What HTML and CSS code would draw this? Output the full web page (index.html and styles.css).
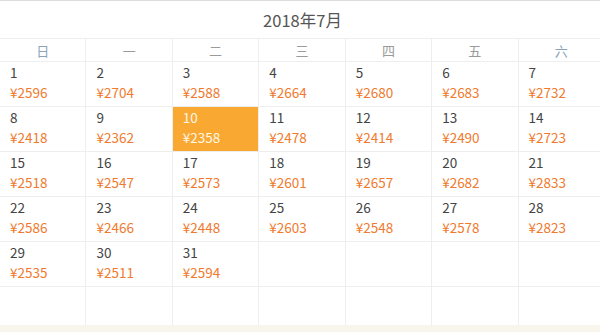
FILE: index.html
```html
<!DOCTYPE html>
<html lang="zh">
<head>
<meta charset="utf-8">
<link rel="stylesheet" href="styles.css">
</head>
<body>
<div class="page">
  <div class="calendar">
    <div class="title">2018年7月</div>
    <div class="weekdays">
      <div class="wd weekend">日</div>
      <div class="wd">一</div>
      <div class="wd">二</div>
      <div class="wd">三</div>
      <div class="wd">四</div>
      <div class="wd">五</div>
      <div class="wd weekend">六</div>
    </div>
    <div class="days">
      <div class="day"><span class="num">1</span><span class="price">¥2596</span></div>
      <div class="day"><span class="num">2</span><span class="price">¥2704</span></div>
      <div class="day"><span class="num">3</span><span class="price">¥2588</span></div>
      <div class="day"><span class="num">4</span><span class="price">¥2664</span></div>
      <div class="day"><span class="num">5</span><span class="price">¥2680</span></div>
      <div class="day"><span class="num">6</span><span class="price">¥2683</span></div>
      <div class="day"><span class="num">7</span><span class="price">¥2732</span></div>
      <div class="day"><span class="num">8</span><span class="price">¥2418</span></div>
      <div class="day"><span class="num">9</span><span class="price">¥2362</span></div>
      <div class="day selected"><span class="num">10</span><span class="price">¥2358</span></div>
      <div class="day"><span class="num">11</span><span class="price">¥2478</span></div>
      <div class="day"><span class="num">12</span><span class="price">¥2414</span></div>
      <div class="day"><span class="num">13</span><span class="price">¥2490</span></div>
      <div class="day"><span class="num">14</span><span class="price">¥2723</span></div>
      <div class="day"><span class="num">15</span><span class="price">¥2518</span></div>
      <div class="day"><span class="num">16</span><span class="price">¥2547</span></div>
      <div class="day"><span class="num">17</span><span class="price">¥2573</span></div>
      <div class="day"><span class="num">18</span><span class="price">¥2601</span></div>
      <div class="day"><span class="num">19</span><span class="price">¥2657</span></div>
      <div class="day"><span class="num">20</span><span class="price">¥2682</span></div>
      <div class="day"><span class="num">21</span><span class="price">¥2833</span></div>
      <div class="day"><span class="num">22</span><span class="price">¥2586</span></div>
      <div class="day"><span class="num">23</span><span class="price">¥2466</span></div>
      <div class="day"><span class="num">24</span><span class="price">¥2448</span></div>
      <div class="day"><span class="num">25</span><span class="price">¥2603</span></div>
      <div class="day"><span class="num">26</span><span class="price">¥2548</span></div>
      <div class="day"><span class="num">27</span><span class="price">¥2578</span></div>
      <div class="day"><span class="num">28</span><span class="price">¥2823</span></div>
      <div class="day"><span class="num">29</span><span class="price">¥2535</span></div>
      <div class="day"><span class="num">30</span><span class="price">¥2511</span></div>
      <div class="day"><span class="num">31</span><span class="price">¥2594</span></div>
      <div class="day empty"></div>
      <div class="day empty"></div>
      <div class="day empty"></div>
      <div class="day empty"></div>
      <div class="day empty"></div>
      <div class="day empty"></div>
      <div class="day empty"></div>
      <div class="day empty"></div>
      <div class="day empty"></div>
      <div class="day empty"></div>
      <div class="day empty"></div>
      <div class="day empty"></div>
      <div class="day empty"></div>
    </div>
  </div>
  <div class="footer"></div>
</div>
</body>
</html>
```

FILE: styles.css
```css
html, body {
  margin: 0;
  padding: 0;
  background: #fff;
  overflow: hidden;
}
body {
  width: 600px;
  height: 332px;
  font-family: "Noto Sans CJK SC", "Noto Sans", sans-serif;
}
.page {
  width: 600px;
  height: 332px;
  overflow: hidden;
  display: flex;
  flex-direction: column;
}
.calendar {
  width: 605px;
  height: 325px;
  flex: none;
  overflow: hidden;
  border-top: 1px solid #dcdcdc;
  box-sizing: border-box;
}
.title {
  height: 37px;
  display: flex;
  align-items: center;
  justify-content: center;
  font-size: 16.5px;
  color: #555;
}
.weekdays {
  display: grid;
  grid-template-columns: repeat(7, 1fr);
  border-top: 1px solid #eeeeee;
  border-bottom: 1px solid #eeeeee;
}
.wd {
  height: 22px;
  display: flex;
  align-items: center;
  justify-content: center;
  font-size: 13px;
  color: #9a9a9a;
  border-right: 1px solid #eeeeee;
}
.wd.weekend {
  color: #8aa3b8;
}
.days {
  display: grid;
  grid-template-columns: repeat(7, 1fr);
}
.day {
  height: 43px;
  border-right: 1px solid #eeeeee;
  border-bottom: 1px solid #eeeeee;
  padding: 1px 0 0 10px;
  display: flex;
  flex-direction: column;
  font-size: 13.5px;
  line-height: 19px;
}
.num {
  color: #444;
}
.price {
  color: #f07a2e;
  margin-top: 1px;
}
.day.selected {
  background: #f9a832;
}
.day.selected .num,
.day.selected .price {
  color: #fff7e6;
}
.footer {
  flex: 1;
  background: #f8f6ec;
}
```
